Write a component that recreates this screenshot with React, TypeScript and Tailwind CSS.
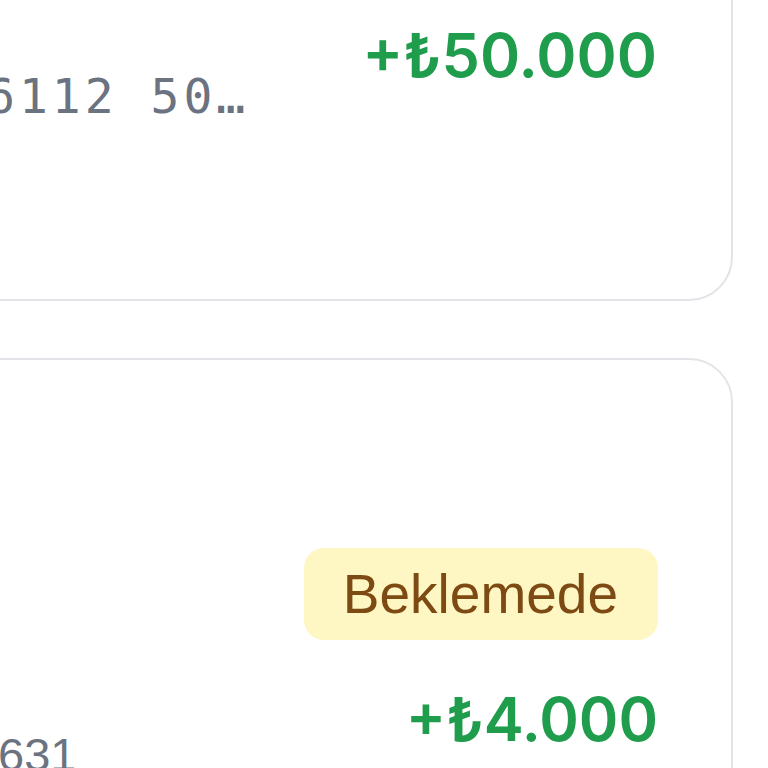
export default function App() {
  return (
    <div className="w-[768px] h-[768px] overflow-hidden bg-white relative">
      <div className="flex flex-col pr-[35px] ml-[-100px] mt-[-100px]">
        {/* Card 1 */}
        <div className="h-[401px] bg-white border-2 border-[#e3e4e8] rounded-[44px] pt-[123px] pl-[84px] pr-[74px] flex items-start justify-between">
          <div
            className="mt-[47px] text-[48px] leading-none text-[#6b7280] tracking-[4px] whitespace-nowrap"
            style={{ fontFamily: '"DejaVu Sans Mono", monospace' }}
          >
            6112 50…
          </div>
          <div
            className="text-[61px] leading-none font-semibold text-[#1f9d4c] whitespace-nowrap"
            style={{ fontFamily: 'Inter, "Liberation Sans", sans-serif' }}
          >
            +₺50.000
          </div>
        </div>
        {/* Card 2 */}
        <div className="mt-[57px] h-[600px] bg-white border-2 border-[#e3e4e8] rounded-[44px] pt-[188px] pl-[96px] pr-[73px] flex items-start justify-between">
          <div
            className="pt-[183px] text-[47px] leading-none text-[#6b7280] whitespace-nowrap"
            style={{ fontFamily: '"Liberation Sans", Arial, sans-serif' }}
          >
            631
          </div>
          <div className="flex flex-col items-end">
            <div
              className="bg-[#fef7c3] text-[#7c4a12] rounded-[20px] pt-[19px] pb-[18px] pl-[39px] pr-[40px] text-[55px] leading-none whitespace-nowrap"
              style={{ fontFamily: '"Liberation Sans", Arial, sans-serif' }}
            >
              Beklemede
            </div>
            <div
              className="mt-[49px] text-[60px] leading-none font-semibold text-[#1f9d4c] whitespace-nowrap"
              style={{ fontFamily: 'Inter, "Liberation Sans", sans-serif' }}
            >
              +₺4.000
            </div>
          </div>
        </div>
      </div>
    </div>
  );
}
